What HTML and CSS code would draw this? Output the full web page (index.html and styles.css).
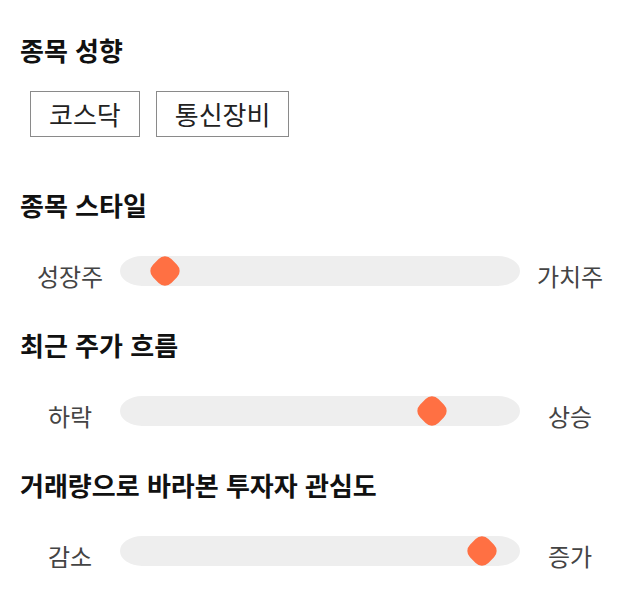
FILE: index.html
```html
<!DOCTYPE html>
<html lang="ko">
<head>
<meta charset="utf-8">
<link rel="stylesheet" href="styles.css">
</head>
<body>
<section class="group first">
  <h2 class="title">종목 성향</h2>
  <div class="tags">
    <span class="tag">코스닥</span>
    <span class="tag">통신장비</span>
  </div>
</section>
<section class="group">
  <h2 class="title">종목 스타일</h2>
  <div class="slider">
    <span class="end">성장주</span>
    <div class="track"><span class="thumb" style="left: 32px"></span></div>
    <span class="end">가치주</span>
  </div>
</section>
<section class="group">
  <h2 class="title">최근 주가 흐름</h2>
  <div class="slider">
    <span class="end">하락</span>
    <div class="track"><span class="thumb" style="left: 299px"></span></div>
    <span class="end">상승</span>
  </div>
</section>
<section class="group">
  <h2 class="title">거래량으로 바라본 투자자 관심도</h2>
  <div class="slider">
    <span class="end">감소</span>
    <div class="track"><span class="thumb" style="left: 349px"></span></div>
    <span class="end">증가</span>
  </div>
</section>
</body>
</html>
```
FILE: styles.css
```css
* { box-sizing: border-box; }
html, body { background: #fff; }
body {
  margin: 0;
  padding: 0 20px;
  font-family: "Noto Sans CJK KR", "Noto Sans", sans-serif;
  color: #222;
}
.group { margin-top: 38px; }
.group.first { margin-top: 34px; }
.group.first + .group { margin-top: 52px; }
.title {
  margin: 0;
  font-size: 26px;
  line-height: 32px;
  font-weight: 700;
  color: #111;
}
.tags {
  display: flex;
  gap: 16px;
  margin: 25px 0 0 10px;
}
.tag {
  height: 46px;
  padding: 0 18px;
  border: 1px solid #8a8a8a;
  font-size: 26px;
  line-height: 44px;
  color: #222;
}
.slider {
  display: flex;
  align-items: flex-start;
  margin-top: 35px;
}
.end {
  width: 100px;
  text-align: center;
  font-size: 24px;
  line-height: 30px;
  padding-top: 5px;
  color: #444;
}
.track {
  position: relative;
  width: 400px;
  height: 30px;
  background: #eeeeee;
  border-radius: 22px / 15px;
}
.thumb {
  position: absolute;
  top: 2px;
  width: 26px;
  height: 26px;
  background: #ff7043;
  border-radius: 9px;
  transform: rotate(45deg);
}
```
